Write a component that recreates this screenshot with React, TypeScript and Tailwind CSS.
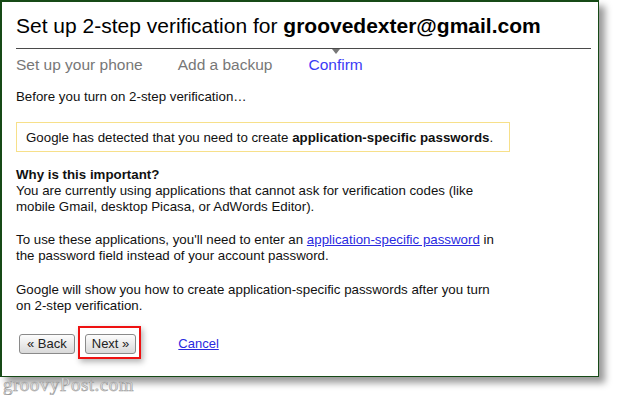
export default function App() {
  return (
    <div className="h-[395px] w-[617px] overflow-hidden bg-white font-['Liberation_Sans',Arial,sans-serif] text-[13.3px] leading-[16px] text-[#111]">
      <div className="h-[377px] w-[599px] border border-l-2 border-t-2 border-[#164a16] bg-white pl-[14px] pt-[12px] shadow-[6px_6px_7px_rgba(0,0,0,0.4)]">
        <h1 className="text-[21px] leading-[24px] text-black">
          Set up 2-step verification for <b>groovedexter@gmail.com</b>
        </h1>

        <div className="mt-[10px] mr-[7px] border-t border-[#4a4a4a]" />
        <div className="mt-[7px] flex text-[15.5px] leading-[18px] text-[#777]">
          <span>Set up your phone</span>
          <span className="ml-[35px]">Add a backup</span>
          <span className="relative ml-[36px] text-[#3b3bf5]">
            Confirm
            <span className="absolute left-1/2 top-[-7px] h-0 w-0 -translate-x-1/2 border-x-[4px] border-t-[5px] border-x-transparent border-t-[#777]" />
          </span>
        </div>

        <p className="mt-[15px]">Before you turn on 2-step verification…</p>

        <div className="mt-[17px] w-[494px] border border-[#f7e08a] pb-[5px] pl-[9px] pt-[7px]">
          Google has detected that you need to create <b>application-specific passwords</b>.
        </div>

        <div className="mt-[15px]">
          <b>Why is this important?</b>
          <br />
          You are currently using applications that cannot ask for verification codes (like
          <br />
          mobile Gmail, desktop Picasa, or AdWords Editor).
        </div>

        <p className="mt-[17px]">
          To use these applications, you'll need to enter an{" "}
          <a href="#" className="text-[#2a2ae0] underline">
            application-specific password
          </a>{" "}
          in
          <br />
          the password field instead of your account password.
        </p>

        <p className="mt-[18px]">
          Google will show you how to create application-specific passwords after you turn
          <br />
          on 2-step verification.
        </p>

        <div className="mt-[12px] flex items-start">
          <button className="ml-[3px] mt-[8px] h-[20px] rounded-[3px] border border-[#8a8a8a] bg-gradient-to-b from-[#fdfdfd] to-[#d9d9d9] px-[7px] text-[13px] leading-[18px] text-[#222]">
            « Back
          </button>
          <div className="ml-[3px] border-2 border-[#e11] pb-[3px] pl-[5px] pr-[3px] pt-[6px] shadow-[2px_3px_6px_rgba(0,0,0,0.3)]">
            <button className="h-[20px] rounded-[3px] border border-[#8a8a8a] bg-gradient-to-b from-[#fdfdfd] to-[#d9d9d9] px-[6px] text-[13px] leading-[18px] text-[#222]">
              Next »
            </button>
          </div>
          <a href="#" className="ml-[37px] mt-[10px] text-[13px] text-[#2a2ae0] underline">
            Cancel
          </a>
        </div>
      </div>
      <div className="pl-[3px] font-['Liberation_Serif',serif] text-[19px] leading-[16px] tracking-[0.5px] text-[#e4e4e4] [-webkit-text-stroke:0.6px_#9a9a9a]">
        groovyPost.com
      </div>
    </div>
  );
}
